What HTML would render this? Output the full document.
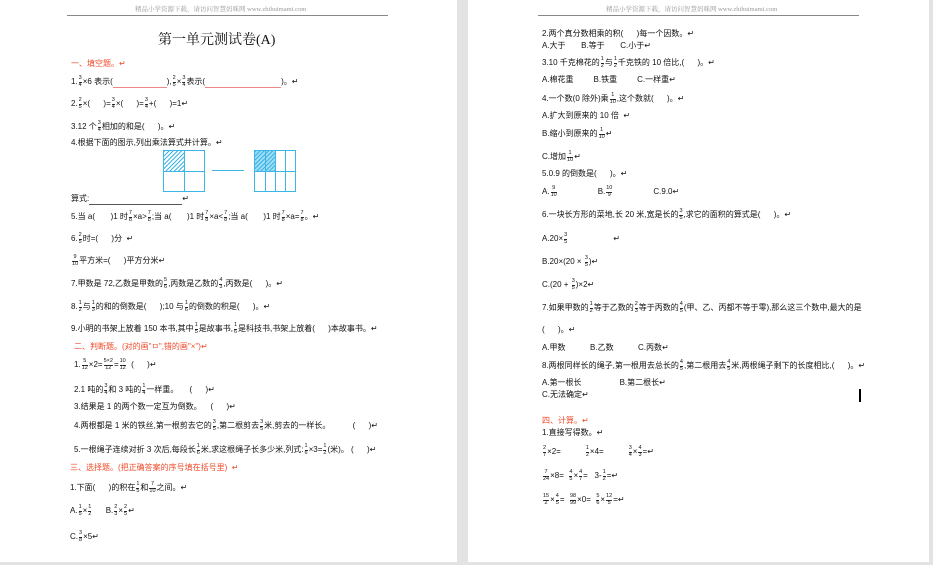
<!DOCTYPE html>
<html><head><meta charset="utf-8"><style>
body{margin:0;width:933px;height:565px;background:#e3e3e3;position:relative;overflow:hidden;font-family:"Liberation Sans","Noto Sans CJK SC",sans-serif;color:#111;}
.pg{position:absolute;top:0;background:#fff;height:562px;}
.t{position:absolute;font-size:8px;line-height:10px;white-space:nowrap;}
.r{color:#f04a2a;}
.h{position:absolute;font-size:6.5px;color:#999;white-space:nowrap;font-family:"Liberation Serif","Noto Serif CJK SC",serif;}
.hl{position:absolute;height:1px;background:#888;}
.f{display:inline-block;vertical-align:middle;font-size:5.5px;line-height:5.5px;text-align:center;margin:0 1px;}
.f i{display:block;font-style:normal;}
.f i:first-child{border-bottom:0.5px solid #333;}
.ul{border-bottom:1px solid #e88;display:inline-block;}
.g{position:absolute;border:1px solid #3bb6e6;}
.g div{position:absolute;background:#3bb6e6;}
</style></head><body>
<div class="pg" style="left:0;width:457px"></div>
<div class="pg" style="left:468px;width:461px"></div>

<div class="h" style="left:135px;top:4px">精品小学资源下载，请访问智慧妈咪网 www.zhihuimami.com</div>
<div class="hl" style="left:67px;top:15px;width:321px"></div>
<div class="h" style="left:606px;top:4px">精品小学资源下载，请访问智慧妈咪网 www.zhihuimami.com</div>
<div class="hl" style="left:538px;top:15px;width:321px"></div>

<div class="t" style="left:158px;top:33px;font-size:14px;line-height:16px;font-family:'Liberation Serif','Noto Serif CJK SC',serif;color:#111">第一单元测试卷(A)</div>
<div class="t r" style="left:71px;top:59px">一、填空题。↵</div>
<div class="t" style="left:71px;top:76px">1.<span class="f"><i>3</i><i>4</i></span>×6 表示(<span class="ul" style="width:54px">&nbsp;</span>),<span class="f"><i>2</i><i>5</i></span>×<span class="f"><i>3</i><i>4</i></span>表示(<span class="ul" style="width:76px">&nbsp;</span>)。↵</div>
<div class="t" style="left:71px;top:98px">2.<span class="f"><i>2</i><i>5</i></span>×(&nbsp;&nbsp;&nbsp;&nbsp;&nbsp;&nbsp;)=<span class="f"><i>3</i><i>4</i></span>×(&nbsp;&nbsp;&nbsp;&nbsp;&nbsp;&nbsp;)=<span class="f"><i>3</i><i>4</i></span>+(&nbsp;&nbsp;&nbsp;&nbsp;&nbsp;&nbsp;)=1↵</div>
<div class="t" style="left:71px;top:121px">3.12 个<span class="f"><i>3</i><i>4</i></span>相加的和是(&nbsp;&nbsp;&nbsp;&nbsp;&nbsp;&nbsp;)。↵</div>
<div class="t" style="left:71px;top:138px">4.根据下面的图示,列出乘法算式并计算。↵</div>
<div class="g" style="left:163px;top:150px;width:40px;height:40px"><div style="left:0;top:0;width:20px;height:20px;background:repeating-linear-gradient(135deg,#3bb6e6 0 1px,#fff 1px 3px)"></div><div style="left:20px;top:0;width:1px;height:40px"></div><div style="left:0;top:20px;width:40px;height:1px"></div></div>
<div style="position:absolute;left:212px;top:170px;width:32px;height:1px;background:#3bb6e6"></div>
<div class="g" style="left:254px;top:150px;width:40px;height:40px"><div style="left:0;top:0;width:20px;height:20px;background:repeating-linear-gradient(135deg,#3bb6e6 0 1px,#9fdcf3 1px 3px)"></div><div style="left:10px;top:0;width:1px;height:40px"></div><div style="left:20px;top:0;width:1px;height:40px"></div><div style="left:30px;top:0;width:1px;height:40px"></div><div style="left:0;top:20px;width:40px;height:1px"></div></div>
<div class="t" style="left:71px;top:194px">算式:<span style="display:inline-block;width:93px;border-bottom:1px solid #555">&nbsp;</span>↵</div>
<div class="t" style="left:71px;top:211px">5.当 a(&nbsp;&nbsp;&nbsp;&nbsp;&nbsp;&nbsp;&nbsp;)1 时<span class="f"><i>7</i><i>8</i></span>×a&gt;<span class="f"><i>7</i><i>8</i></span>;当 a(&nbsp;&nbsp;&nbsp;&nbsp;&nbsp;&nbsp;&nbsp;)1 时<span class="f"><i>7</i><i>8</i></span>×a&lt;<span class="f"><i>7</i><i>8</i></span>;当 a(&nbsp;&nbsp;&nbsp;&nbsp;&nbsp;&nbsp;&nbsp;)1 时<span class="f"><i>7</i><i>8</i></span>×a=<span class="f"><i>7</i><i>8</i></span>。↵</div>
<div class="t" style="left:71px;top:233px">6.<span class="f"><i>2</i><i>5</i></span>时=(&nbsp;&nbsp;&nbsp;&nbsp;&nbsp;&nbsp;)分&nbsp;&nbsp;↵</div>
<div class="t" style="left:71px;top:255px"><span class="f"><i>9</i><i>10</i></span>平方米=(&nbsp;&nbsp;&nbsp;&nbsp;&nbsp;&nbsp;)平方分米↵</div>
<div class="t" style="left:71px;top:278px">7.甲数是 72,乙数是甲数的<span class="f"><i>5</i><i>6</i></span>,丙数是乙数的<span class="f"><i>4</i><i>3</i></span>,丙数是(&nbsp;&nbsp;&nbsp;&nbsp;&nbsp;&nbsp;)。↵</div>
<div class="t" style="left:71px;top:301px">8.<span class="f"><i>1</i><i>2</i></span>与<span class="f"><i>1</i><i>3</i></span>的和的倒数是(&nbsp;&nbsp;&nbsp;&nbsp;&nbsp;&nbsp;);10 与<span class="f"><i>1</i><i>6</i></span>的倒数的积是(&nbsp;&nbsp;&nbsp;&nbsp;&nbsp;&nbsp;)。↵</div>
<div class="t" style="left:71px;top:323px">9.小明的书架上放着 150 本书,其中<span class="f"><i>1</i><i>5</i></span>是故事书,<span class="f"><i>1</i><i>6</i></span>是科技书,书架上放着(&nbsp;&nbsp;&nbsp;&nbsp;&nbsp;&nbsp;)本故事书。↵</div>
<div class="t r" style="left:74px;top:342px">二、判断题。(对的画"ㅁ",错的画"×")↵</div>
<div class="t" style="left:74px;top:359px">1.<span class="f"><i>5</i><i>12</i></span>×2=<span class="f"><i>5×2</i><i>12</i></span>=<span class="f"><i>10</i><i>12</i></span>&nbsp;&nbsp;(&nbsp;&nbsp;&nbsp;&nbsp;&nbsp;&nbsp;)↵</div>
<div class="t" style="left:74px;top:384px">2.1 吨的<span class="f"><i>3</i><i>4</i></span>和 3 吨的<span class="f"><i>1</i><i>4</i></span>一样重。&nbsp;&nbsp;&nbsp;&nbsp;&nbsp;(&nbsp;&nbsp;&nbsp;&nbsp;&nbsp;&nbsp;)↵</div>
<div class="t" style="left:74px;top:402px">3.结果是 1 的两个数一定互为倒数。&nbsp;&nbsp;&nbsp;&nbsp;(&nbsp;&nbsp;&nbsp;&nbsp;&nbsp;&nbsp;)↵</div>
<div class="t" style="left:74px;top:420px">4.两根都是 1 米的铁丝,第一根剪去它的<span class="f"><i>3</i><i>5</i></span>,第二根剪去<span class="f"><i>3</i><i>5</i></span>米,剪去的一样长。&nbsp;&nbsp;&nbsp;&nbsp;&nbsp;&nbsp;&nbsp;&nbsp;&nbsp;&nbsp;(&nbsp;&nbsp;&nbsp;&nbsp;&nbsp;&nbsp;)↵</div>
<div class="t" style="left:74px;top:444px">5.一根绳子连续对折 3 次后,每段长<span class="f"><i>1</i><i>6</i></span>米,求这根绳子长多少米,列式:<span class="f"><i>1</i><i>6</i></span>×3=<span class="f"><i>1</i><i>2</i></span>(米)。&nbsp;(&nbsp;&nbsp;&nbsp;&nbsp;&nbsp;&nbsp;)↵</div>
<div class="t r" style="left:70px;top:463px">三、选择题。(把正确答案的序号填在括号里)&nbsp;&nbsp;↵</div>
<div class="t" style="left:70px;top:482px">1.下面(&nbsp;&nbsp;&nbsp;&nbsp;&nbsp;&nbsp;)的积在<span class="f"><i>1</i><i>5</i></span>和<span class="f"><i>7</i><i>10</i></span>之间。↵</div>
<div class="t" style="left:70px;top:505px">A.<span class="f"><i>1</i><i>5</i></span>×<span class="f"><i>1</i><i>2</i></span>&nbsp;&nbsp;&nbsp;&nbsp;&nbsp;&nbsp;B.<span class="f"><i>2</i><i>3</i></span>×<span class="f"><i>2</i><i>5</i></span>↵</div>
<div class="t" style="left:70px;top:531px">C.<span class="f"><i>3</i><i>8</i></span>×5↵</div>

<div class="t" style="left:542px;top:29px">2.两个真分数相乘的积(&nbsp;&nbsp;&nbsp;&nbsp;&nbsp;&nbsp;)每一个因数。↵</div>
<div class="t" style="left:542px;top:41px">A.大于&nbsp;&nbsp;&nbsp;&nbsp;&nbsp;&nbsp;&nbsp;B.等于&nbsp;&nbsp;&nbsp;&nbsp;&nbsp;&nbsp;&nbsp;C.小于↵</div>
<div class="t" style="left:542px;top:57px">3.10 千克棉花的<span class="f"><i>1</i><i>2</i></span>与<span class="f"><i>1</i><i>2</i></span>千克铁的 10 倍比,(&nbsp;&nbsp;&nbsp;&nbsp;&nbsp;&nbsp;)。↵</div>
<div class="t" style="left:542px;top:75px">A.棉花重&nbsp;&nbsp;&nbsp;&nbsp;&nbsp;&nbsp;&nbsp;&nbsp;&nbsp;B.铁重&nbsp;&nbsp;&nbsp;&nbsp;&nbsp;&nbsp;&nbsp;&nbsp;&nbsp;C.一样重↵</div>
<div class="t" style="left:542px;top:93px">4.一个数(0 除外)乘<span class="f"><i>1</i><i>10</i></span>,这个数就(&nbsp;&nbsp;&nbsp;&nbsp;&nbsp;&nbsp;)。↵</div>
<div class="t" style="left:542px;top:111px">A.扩大到原来的 10 倍&nbsp;&nbsp;↵</div>
<div class="t" style="left:542px;top:128px">B.缩小到原来的<span class="f"><i>1</i><i>10</i></span>↵</div>
<div class="t" style="left:542px;top:151px">C.增加<span class="f"><i>1</i><i>10</i></span>↵</div>
<div class="t" style="left:542px;top:169px">5.0.9 的倒数是(&nbsp;&nbsp;&nbsp;&nbsp;&nbsp;&nbsp;)。↵</div>
<div class="t" style="left:542px;top:186px">A.<span class="f"><i>9</i><i>10</i></span><span style="display:inline-block;width:40px"></span>B.<span class="f"><i>10</i><i>9</i></span><span style="display:inline-block;width:40px"></span>C.9.0↵</div>
<div class="t" style="left:542px;top:209px">6.一块长方形的菜地,长 20 米,宽是长的<span class="f"><i>3</i><i>5</i></span>,求它的面积的算式是(&nbsp;&nbsp;&nbsp;&nbsp;&nbsp;&nbsp;)。↵</div>
<div class="t" style="left:542px;top:233px">A.20×<span class="f"><i>3</i><i>5</i></span><span style="display:inline-block;width:45px"></span>↵</div>
<div class="t" style="left:542px;top:256px">B.20×(20 × <span class="f"><i>3</i><i>5</i></span>)↵</div>
<div class="t" style="left:542px;top:279px">C.(20 + <span class="f"><i>3</i><i>5</i></span>)×2↵</div>
<div class="t" style="left:542px;top:302px">7.如果甲数的<span class="f"><i>1</i><i>2</i></span>等于乙数的<span class="f"><i>2</i><i>3</i></span>等于丙数的<span class="f"><i>4</i><i>5</i></span>(甲、乙、丙都不等于零),那么这三个数中,最大的是</div>
<div class="t" style="left:542px;top:325px">(&nbsp;&nbsp;&nbsp;&nbsp;&nbsp;&nbsp;)。↵</div>
<div class="t" style="left:542px;top:343px">A.甲数&nbsp;&nbsp;&nbsp;&nbsp;&nbsp;&nbsp;&nbsp;&nbsp;&nbsp;&nbsp;&nbsp;B.乙数&nbsp;&nbsp;&nbsp;&nbsp;&nbsp;&nbsp;&nbsp;&nbsp;&nbsp;&nbsp;&nbsp;C.丙数↵</div>
<div class="t" style="left:542px;top:360px">8.两根同样长的绳子,第一根用去总长的<span class="f"><i>4</i><i>5</i></span>,第二根用去<span class="f"><i>4</i><i>5</i></span>米,两根绳子剩下的长度相比,(&nbsp;&nbsp;&nbsp;&nbsp;&nbsp;&nbsp;)。↵</div>
<div class="t" style="left:542px;top:378px">A.第一根长<span style="display:inline-block;width:38px"></span>B.第二根长↵</div>
<div class="t" style="left:542px;top:390px">C.无法确定↵</div>
<div style="position:absolute;left:859px;top:389px;width:2px;height:13px;background:#000"></div>
<div class="t r" style="left:542px;top:416px">四、计算。↵</div>
<div class="t" style="left:542px;top:428px">1.直接写得数。↵</div>
<div class="t" style="left:542px;top:446px"><span class="f"><i>2</i><i>7</i></span>×2=<span style="display:inline-block;width:24px"></span><span class="f"><i>1</i><i>2</i></span>×4=<span style="display:inline-block;width:24px"></span><span class="f"><i>3</i><i>4</i></span>×<span class="f"><i>4</i><i>3</i></span>=↵</div>
<div class="t" style="left:542px;top:470px"><span class="f"><i>7</i><i>24</i></span>×8=&nbsp;&nbsp;<span class="f"><i>4</i><i>5</i></span>×<span class="f"><i>4</i><i>7</i></span>=&nbsp;&nbsp;&nbsp;3-<span class="f"><i>1</i><i>2</i></span>=↵</div>
<div class="t" style="left:542px;top:494px"><span class="f"><i>15</i><i>2</i></span>×<span class="f"><i>4</i><i>5</i></span>=&nbsp;&nbsp;<span class="f"><i>98</i><i>99</i></span>×0=&nbsp;&nbsp;<span class="f"><i>5</i><i>6</i></span>×<span class="f"><i>12</i><i>5</i></span>=↵</div>
</body></html>
